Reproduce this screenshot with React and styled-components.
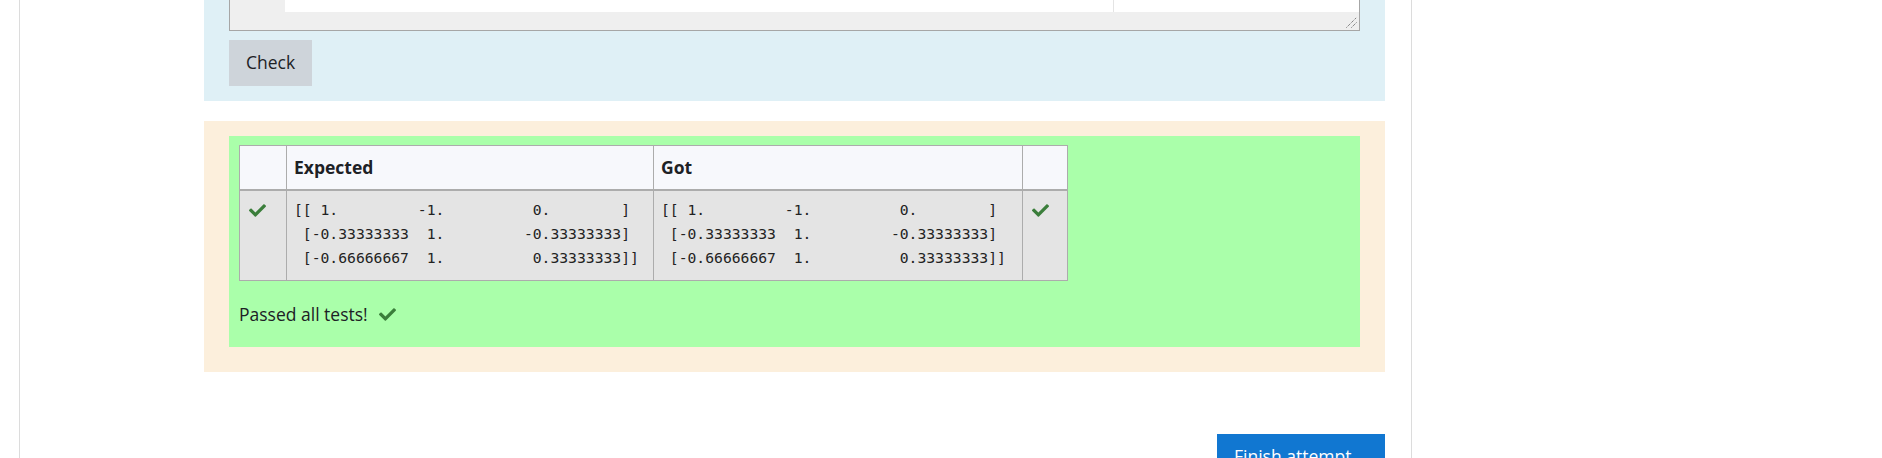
import React from 'react'
import styled, { createGlobalStyle } from 'styled-components'
import { FaCheck } from 'react-icons/fa'

const GlobalStyle = createGlobalStyle`
  html, body {
    margin: 0;
    padding: 0;
    background: #fff;
  }
  body {
    font-family: 'Open Sans', 'Noto Sans', sans-serif;
    font-size: 17.5px;
    line-height: 27px;
    color: #1d2125;
    overflow: hidden;
  }
`

const expected = `[[ 1.         -1.          0.        ]
 [-0.33333333  1.         -0.33333333]
 [-0.66666667  1.          0.33333333]]`

const App = () => (
  <>
    <GlobalStyle />
    <Page>
      <Column>
        <AnswerPanel>
          <Editor>
            <EditorLines>
              <Gutter />
              <CodeArea />
              <MarginArea />
            </EditorLines>
            <Scrollbar />
            <ResizeHandle width='11' height='11' viewBox='0 0 11 11'>
              <line x1='0.5' y1='10.5' x2='10.5' y2='0.5' stroke='#555' strokeDasharray='1 1' />
              <line x1='5.5' y1='10.5' x2='10.5' y2='5.5' stroke='#555' strokeDasharray='1 1' />
            </ResizeHandle>
          </Editor>
          <Button>Check</Button>
        </AnswerPanel>

        <FeedbackPanel>
          <Results>
            <ResultTable>
              <colgroup>
                <col style={{ width: 47 }} />
                <col style={{ width: 367 }} />
                <col style={{ width: 369 }} />
                <col style={{ width: 45 }} />
              </colgroup>
              <thead>
                <tr>
                  <HeadCell />
                  <HeadCell>Expected</HeadCell>
                  <HeadCell>Got</HeadCell>
                  <HeadCell />
                </tr>
              </thead>
              <tbody>
                <tr>
                  <IconCell><IconBox><FaCheck size={17} /></IconBox></IconCell>
                  <BodyCell><Output>{expected}</Output></BodyCell>
                  <BodyCell><Output>{expected}</Output></BodyCell>
                  <IconCell><IconBox><FaCheck size={17} /></IconBox></IconCell>
                </tr>
              </tbody>
            </ResultTable>
            <Passed>
              Passed all tests!
              <Tick><FaCheck size={17} /></Tick>
            </Passed>
          </Results>
        </FeedbackPanel>

        <Actions>
          <Button primary>Finish attempt</Button>
        </Actions>
      </Column>
    </Page>
  </>
)

export default App

const Page = styled.div`
  display: flex;
  padding-left: 19px;
  height: 458px;
`

const Column = styled.div`
  box-sizing: border-box;
  width: 1393px;
  border-left: 1px solid #dcdcdc;
  border-right: 1px solid #dcdcdc;
  padding: 0 26px 0 184px;
`

const AnswerPanel = styled.div`
  background: #dff0f6;
  padding: 0 25px 15px;
`

const Editor = styled.div`
  position: relative;
  background: #efefef;
  border: 1px solid #a6a6a6;
  border-top: none;
`

const EditorLines = styled.div`
  display: flex;
  height: 12px;
`

const Gutter = styled.div`
  width: 55px;
  background: #efefef;
`

const CodeArea = styled.div`
  width: 828px;
  background: #fff;
`

const MarginArea = styled.div`
  flex: 1;
  background: #fff;
  border-left: 1px solid #e4e4e4;
`

const Scrollbar = styled.div`
  height: 18px;
`

const ResizeHandle = styled.svg`
  position: absolute;
  right: 2px;
  bottom: 2px;
`

const Button = styled.button`
  display: inline-block;
  box-sizing: border-box;
  width: ${p => (p.primary ? '168px' : 'auto')};
  margin-top: ${p => (p.primary ? '0' : '9px')};
  padding: 9px 17px 10px;
  border: none;
  border-radius: 0;
  background: ${p => (p.primary ? '#1177d1' : '#ced4da')};
  color: ${p => (p.primary ? '#fff' : '#1d2125')};
  font-family: inherit;
  font-size: 17.5px;
  line-height: 27px;
  text-align: left;
`

const FeedbackPanel = styled.div`
  margin-top: 20px;
  background: #fcefdc;
  padding: 15px 25px 25px;
`

const Results = styled.div`
  background: #aaffaa;
  padding: 9px 10px 0;
`

const ResultTable = styled.table`
  width: 828px;
  table-layout: fixed;
  border-collapse: collapse;
  border: 1px solid #acacac;
`

const HeadCell = styled.th`
  height: 43px;
  padding: 0 7px;
  background: #f7f8fc;
  border: 1px solid #acacac;
  border-bottom: 2px solid #acacac;
  text-align: left;
  font-weight: 700;
  font-size: 17.5px;
`

const BodyCell = styled.td`
  padding: 7px 7px 10px;
  background: #e4e4e4;
  border: 1px solid #acacac;
  vertical-align: top;
`

const IconCell = styled(BodyCell)`
  padding-left: 9px;
  color: #3b7e3b;
`

const IconBox = styled.div`
  display: flex;
  align-items: center;
  height: 24px;
`

const Output = styled.pre`
  margin: 0;
  font-family: 'DejaVu Sans Mono', 'Liberation Mono', monospace;
  font-size: 14.7px;
  line-height: 24px;
  color: #222;
  white-space: pre;
`

const Passed = styled.div`
  display: flex;
  align-items: center;
  gap: 11px;
  padding: 20px 0 19px;
`

const Tick = styled.span`
  display: flex;
  color: #3b7e3b;
`

const Actions = styled.div`
  display: flex;
  justify-content: flex-end;
  margin-top: 62px;
`
